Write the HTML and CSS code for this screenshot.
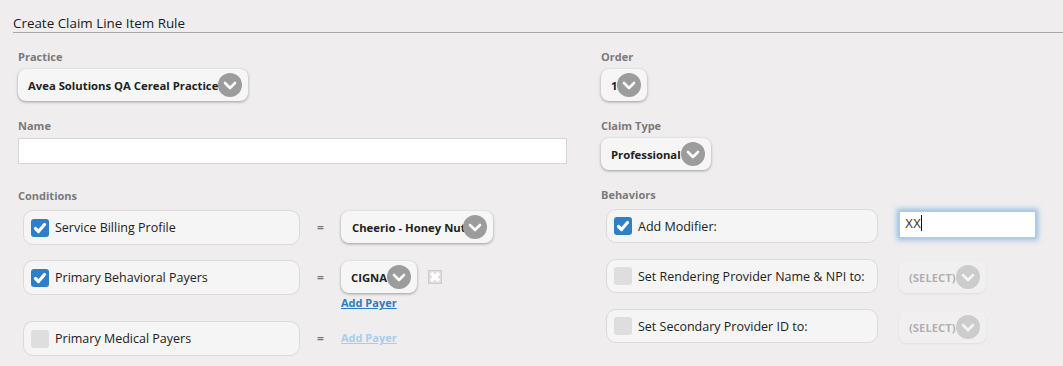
FILE: index.html
```html
<!DOCTYPE html>
<html lang="en">

<head>
    <meta charset="UTF-8">
    <title>Create Claim Line Item Rule</title>
    <link rel="stylesheet" href="styles.css">
</head>

<body>
    <div class="panel">
        <h1 class="title">Create Claim Line Item Rule</h1>

        <div class="form">
            <div class="col col-left">
                <div class="field">
                    <label class="label">Practice</label>
                    <div class="select select-practice">
                        <span class="select-text">Avea Solutions QA Cereal Practice</span>
                        <span class="chev"><svg viewBox="0 0 24 24"><circle cx="12" cy="12" r="12"/><path d="M7 10l5 5 5-5"/></svg></span>
                    </div>
                </div>

                <div class="field field-name">
                    <label class="label">Name</label>
                    <input class="text-input name-input" type="text">
                </div>

                <div class="field">
                    <label class="label">Conditions</label>
                    <div class="rows">
                        <div class="row">
                            <div class="rule-box cond-box">
                                <span class="check checked"><svg viewBox="0 0 18 18"><path d="M4.5 9.5l3 3 6-7"/></svg></span>
                                <span class="rule-text">Service Billing Profile</span>
                            </div>
                            <span class="eq">=</span>
                            <div class="row-value">
                                <div class="select select-cheerio">
                                    <span class="select-text">Cheerio - Honey Nut</span>
                                    <span class="chev"><svg viewBox="0 0 24 24"><circle cx="12" cy="12" r="12"/><path d="M7 10l5 5 5-5"/></svg></span>
                                </div>
                            </div>
                        </div>

                        <div class="row">
                            <div class="rule-box cond-box">
                                <span class="check checked"><svg viewBox="0 0 18 18"><path d="M4.5 9.5l3 3 6-7"/></svg></span>
                                <span class="rule-text">Primary Behavioral Payers</span>
                            </div>
                            <span class="eq">=</span>
                            <div class="row-value">
                                <div class="payer-line">
                                    <div class="select">
                                        <span class="select-text">CIGNA</span>
                                        <span class="chev"><svg viewBox="0 0 24 24"><circle cx="12" cy="12" r="12"/><path d="M7 10l5 5 5-5"/></svg></span>
                                    </div>
                                    <span class="remove"><svg viewBox="0 0 14 14"><rect x="0" y="0" width="14" height="14" fill="#dedede"/><rect x="0.5" y="0.5" width="13" height="13" fill="none" stroke="#bdbdbd" stroke-dasharray="1 1"/><path d="M3 3l8 8M11 3l-8 8" stroke="#fff" stroke-width="3.6"/></svg></span>
                                </div>
                                <a class="add-link" href="#">Add Payer</a>
                            </div>
                        </div>

                        <div class="row">
                            <div class="rule-box cond-box">
                                <span class="check"></span>
                                <span class="rule-text">Primary Medical Payers</span>
                            </div>
                            <span class="eq">=</span>
                            <div class="row-value">
                                <a class="add-link disabled" href="#">Add Payer</a>
                            </div>
                        </div>
                    </div>
                </div>
            </div>

            <div class="col col-right">
                <div class="field">
                    <label class="label">Order</label>
                    <div class="select">
                        <span class="select-text">1</span>
                        <span class="chev"><svg viewBox="0 0 24 24"><circle cx="12" cy="12" r="12"/><path d="M7 10l5 5 5-5"/></svg></span>
                    </div>
                </div>

                <div class="field">
                    <label class="label">Claim Type</label>
                    <div class="select">
                        <span class="select-text">Professional</span>
                        <span class="chev"><svg viewBox="0 0 24 24"><circle cx="12" cy="12" r="12"/><path d="M7 10l5 5 5-5"/></svg></span>
                    </div>
                </div>

                <div class="field">
                    <label class="label">Behaviors</label>
                    <div class="rows rows-right">
                        <div class="row">
                            <div class="rule-box beh-box">
                                <span class="check checked"><svg viewBox="0 0 18 18"><path d="M4.5 9.5l3 3 6-7"/></svg></span>
                                <span class="rule-text">Add Modifier:</span>
                            </div>
                            <div class="beh-value">
                                <div class="text-input modifier-input">XX<span class="caret"></span></div>
                            </div>
                        </div>

                        <div class="row">
                            <div class="rule-box beh-box">
                                <span class="check"></span>
                                <span class="rule-text">Set Rendering Provider Name &amp; NPI to:</span>
                            </div>
                            <div class="beh-value">
                                <div class="select disabled">
                                    <span class="select-text">(SELECT)</span>
                                    <span class="chev"><svg viewBox="0 0 24 24"><circle cx="12" cy="12" r="12"/><path d="M7 10l5 5 5-5"/></svg></span>
                                </div>
                            </div>
                        </div>

                        <div class="row">
                            <div class="rule-box beh-box">
                                <span class="check"></span>
                                <span class="rule-text">Set Secondary Provider ID to:</span>
                            </div>
                            <div class="beh-value">
                                <div class="select disabled">
                                    <span class="select-text">(SELECT)</span>
                                    <span class="chev"><svg viewBox="0 0 24 24"><circle cx="12" cy="12" r="12"/><path d="M7 10l5 5 5-5"/></svg></span>
                                </div>
                            </div>
                        </div>
                    </div>
                </div>
            </div>
        </div>
    </div>
</body>

</html>
```

FILE: styles.css
```css
body {
    margin: 0;
    padding: 0;
    font-family: 'Open Sans', sans-serif;
    color: #222;
    background: #efedee;
}

.panel {
    padding: 14px 0 0 13px;
    height: 352px;
    overflow: hidden;
}

.title {
    margin: 0;
    font-size: 13.4px;
    font-weight: 400;
    line-height: 18px;
    color: #1a1a1a;
    border-bottom: 1px solid #a8a8a8;
}

.form {
    display: flex;
    padding-left: 5px;
}

.col-left {
    width: 583px;
}

.col-right {
    flex: 1;
}

.field {
    margin-top: 17px;
}

.field + .field {
    margin-top: 18px;
}

.field-name {
    padding-bottom: 7px;
}

.label {
    display: block;
    font-size: 11px;
    font-weight: 700;
    line-height: 14px;
    color: #7a7a7a;
    margin-bottom: 5px;
}

.select {
    position: relative;
    display: inline-flex;
    align-items: center;
    height: 32px;
    padding: 0 30px 0 10px;
    box-sizing: border-box;
    background: #f6f6f6;
    border-radius: 8px;
    box-shadow: 0 1px 3px rgba(0, 0, 0, 0.35);
    font-size: 11.3px;
    font-weight: 700;
    color: #222;
    white-space: nowrap;
    overflow: hidden;
}

.select-cheerio {
    width: 152px;
    padding-left: 11px;
}

.chev {
    position: absolute;
    right: 6px;
    top: 4px;
    width: 24px;
    height: 24px;
}

.chev svg {
    display: block;
    width: 24px;
    height: 24px;
}

.chev circle {
    fill: #9c9c9c;
}

.chev path {
    fill: none;
    stroke: #fff;
    stroke-width: 2.6;
    stroke-linecap: round;
    stroke-linejoin: round;
}

.select.disabled {
    opacity: 0.4;
    box-shadow: 0 1px 2px rgba(0, 0, 0, 0.15);
    color: #555;
}

.text-input {
    display: block;
    box-sizing: border-box;
    background: #fff;
    border: 1px solid #d6d6d6;
    height: 26px;
}

.name-input {
    width: 549px;
    margin: 0;
    padding: 0;
}

.rows {
    display: flex;
    flex-direction: column;
    gap: 15px;
    padding-top: 2px;
}

.rows-right {
    gap: 16px;
}

.row {
    display: flex;
    align-items: flex-start;
}

.rule-box {
    display: flex;
    align-items: center;
    height: 35px;
    box-sizing: border-box;
    padding-left: 7px;
    margin-left: 5px;
    background: #f5f5f5;
    border: 1px solid #dadada;
    border-radius: 10px;
    font-size: 12.5px;
    color: #222;
}

.cond-box {
    width: 277px;
}

.beh-box {
    width: 272px;
    height: 34px;
}

.check {
    width: 18px;
    height: 18px;
    border-radius: 3px;
    background: #dedede;
    margin-right: 6px;
    flex-shrink: 0;
}

.check.checked {
    background: #2f7fc8;
}

.check svg {
    display: block;
    width: 18px;
    height: 18px;
}

.check path {
    fill: none;
    stroke: #fff;
    stroke-width: 3.2;
    stroke-linecap: round;
    stroke-linejoin: round;
}

.eq {
    width: 41px;
    text-align: center;
    font-size: 12px;
    font-weight: 700;
    color: #777;
    line-height: 35px;
}

.row-value {
    display: flex;
    flex-direction: column;
    align-items: flex-start;
    padding-top: 1px;
}

.payer-line {
    display: flex;
    align-items: center;
    gap: 11px;
}

.remove svg {
    display: block;
    width: 14px;
    height: 14px;
}

.add-link {
    display: block;
    font-size: 11px;
    font-weight: 700;
    line-height: 14px;
    color: #2a7cc4;
    margin: 3px 0 -4px;
}

.add-link.disabled {
    color: #a9cde9;
    margin: 9px 0 0;
}

.beh-value {
    padding-left: 21px;
    padding-top: 2px;
}

.modifier-input {
    width: 137px;
    height: 27px;
    padding-left: 5px;
    border-color: #c6c6c6;
    box-shadow: 0 0 5px 2px rgba(86, 156, 224, 0.6);
    font-family: 'Liberation Sans', sans-serif;
    font-size: 12px;
    line-height: 25px;
    color: #333;
}

.caret {
    display: inline-block;
    width: 1px;
    height: 16px;
    background: #111;
    vertical-align: -3px;
}
```
